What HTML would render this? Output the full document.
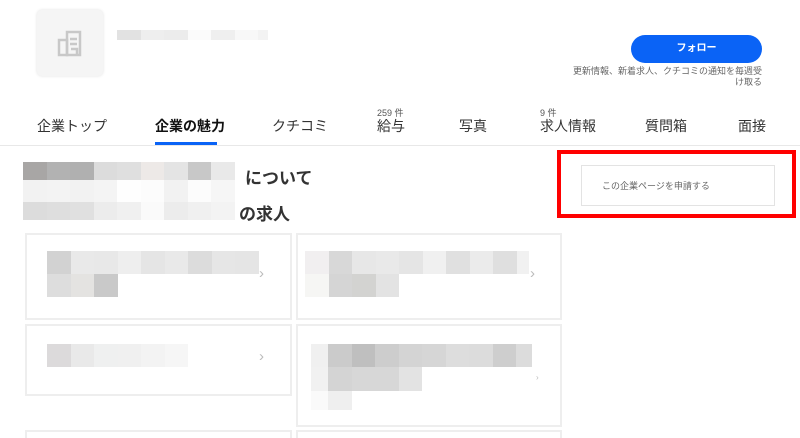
<!DOCTYPE html>
<html><head><meta charset="utf-8"><style>
*{margin:0;padding:0;box-sizing:border-box}
html,body{width:800px;height:438px;overflow:hidden}
body{background:#fff;position:relative;font-family:"Liberation Sans","Noto Sans CJK JP",sans-serif;color:#333}
.a{position:absolute}
.tab{position:absolute;top:116px;font-size:14px;color:#333;white-space:nowrap}
.cnt{position:absolute;top:106px;font-size:9px;color:#555}
.card{position:absolute;border:2px solid #eee;background:#fff}
.row{position:absolute;display:flex;height:23px}
.row i{display:block;width:23.5px;height:100%}
.chev{position:absolute;font-size:15px;color:#bbb}
</style></head><body>
<div class="a" style="left:37px;top:10px;width:66px;height:66px;background:#f5f5f5;border-radius:5px;box-shadow:0 0 3px rgba(0,0,0,.12)">
<svg width="66" height="66" viewBox="0 0 66 66"><g fill="none" stroke="#c8c8c8" stroke-width="2.5"><rect x="30" y="22" width="13" height="23"/><rect x="22" y="30" width="8" height="15"/><path d="M33 29h7M33 34h7M34 39h6v6"/></g></svg></div>
<div class="row" style="left:117px;top:30px;height:10px"><i style="background:#e2e2e2"></i><i style="background:#eee"></i><i style="background:#ececec"></i><i style="background:#fbfbfb"></i><i style="background:#efefef"></i><i style="background:#f8f8f8"></i><i style="background:#f3f3f3;width:10px"></i></div>
<div class="a" style="left:631px;top:35px;width:131px;height:28px;background:#0a63f6;border-radius:14px;color:#fff;font-size:10px;font-weight:bold;text-align:center;line-height:28px">フォロー</div>
<div class="a" style="right:38px;top:66px;width:220px;text-align:right;font-size:9px;line-height:11px;color:#666">更新情報、新着求人、クチコミの通知を毎週受<br>け取る</div>
<div class="tab" style="left:37px">企業トップ</div>
<div class="tab" style="left:155px;font-weight:bold;color:#111">企業の魅力</div>
<div class="a" style="left:155px;top:142px;width:62px;height:3px;background:#0a63f6"></div>
<div class="tab" style="left:272px">クチコミ</div>
<div class="cnt" style="left:377px">259 件</div><div class="tab" style="left:377px">給与</div>
<div class="tab" style="left:459px">写真</div>
<div class="cnt" style="left:540px">9 件</div><div class="tab" style="left:540px">求人情報</div>
<div class="tab" style="left:645px">質問箱</div>
<div class="tab" style="left:738px">面接</div>
<div class="a" style="left:0;top:145px;width:800px;height:1px;background:#e8e8e8"></div>
<div class="row" style="left:23px;top:162px;height:18px"><i style="background:#a8a6a5"></i><i style="background:#b2b2b2"></i><i style="background:#b0b0b0"></i><i style="background:#dcdcdc"></i><i style="background:#dfdfdf"></i><i style="background:#ede9e7"></i><i style="background:#e4e4e4"></i><i style="background:#c8c8c8"></i><i style="background:#e9e9e9"></i></div>
<div class="row" style="left:23px;top:180px;height:22px"><i style="background:#f2f2f2"></i><i style="background:#f3f3f3"></i><i style="background:#f2f2f2"></i><i style="background:#f4f4f4"></i><i style="background:#fefefe"></i><i style="background:#fcfcfc"></i><i style="background:#f2f2f2"></i><i style="background:#fcfcfc"></i><i style="background:#f6f6f6"></i></div>
<div class="row" style="left:23px;top:202px;height:18px"><i style="background:#dcdcdc"></i><i style="background:#dedede"></i><i style="background:#e0e0e0"></i><i style="background:#ececec"></i><i style="background:#f0f0f0"></i><i style="background:#fafafa"></i><i style="background:#ececec"></i><i style="background:#f0f0f0"></i><i style="background:#f3f3f3"></i></div>
<div class="a" style="left:245px;top:164px;font-size:17px;font-weight:bold;color:#333">について</div>
<div class="a" style="left:239px;top:200px;font-size:17px;font-weight:bold;color:#333">の求人</div>
<div class="a" style="left:557px;top:150px;width:239px;height:68px;border:4px solid #f00"></div>
<div class="a" style="left:581px;top:165px;width:194px;height:41px;border:1px solid #e3e3e3;font-size:9px;color:#666;padding:13px 0 0 20px">この企業ページを申請する</div>
<div class="card" style="left:25px;top:233px;width:267px;height:87px"></div>
<div class="row" style="left:47px;top:251px"><i style="background:#d2d2d2"></i><i style="background:#e9e9e9"></i><i style="background:#e8e8e8"></i><i style="background:#eeeeee"></i><i style="background:#e5e5e5"></i><i style="background:#e9e9e9"></i><i style="background:#dcdcdc"></i><i style="background:#e6e6e6"></i><i style="background:#e5e5e5"></i></div>
<div class="row" style="left:47px;top:274px"><i style="background:#ddd"></i><i style="background:#e4e3e1"></i><i style="background:#c9c9c9"></i></div>
<div class="chev" style="left:259px;top:265px">›</div>
<div class="card" style="left:296px;top:233px;width:266px;height:87px"></div>
<div class="row" style="left:305px;top:251px"><i style="background:#f1eff0"></i><i style="background:#d8d8d8"></i><i style="background:#e7e7e7"></i><i style="background:#e9e9e9"></i><i style="background:#e5e5e5"></i><i style="background:#f0f0f0"></i><i style="background:#e0e0e0"></i><i style="background:#ebebeb"></i><i style="background:#dfdfdf"></i><i style="background:#f1f1f1;width:12px"></i></div>
<div class="row" style="left:305px;top:274px"><i style="background:#f6f6f4"></i><i style="background:#d5d5d5"></i><i style="background:#d3d3d1"></i><i style="background:#e3e3e3"></i></div>
<div class="chev" style="left:530px;top:265px">›</div>
<div class="card" style="left:25px;top:324px;width:267px;height:72px"></div>
<div class="row" style="left:47px;top:344px"><i style="background:#dcdadb"></i><i style="background:#e9e9e9"></i><i style="background:#eff0f0"></i><i style="background:#f0f0f0"></i><i style="background:#f3f3f3"></i><i style="background:#f6f6f6"></i></div>
<div class="chev" style="left:259px;top:348px">›</div>
<div class="card" style="left:296px;top:324px;width:266px;height:103px"></div>
<div class="row" style="left:311px;top:344px"><i style="background:#f0f0f0;width:17px"></i><i style="background:#cbcbcb"></i><i style="background:#bfbfbf"></i><i style="background:#cdcdcd"></i><i style="background:#d4d4d4"></i><i style="background:#d6d6d6"></i><i style="background:#dddddd"></i><i style="background:#dcdcdc"></i><i style="background:#cecece"></i><i style="background:#dcdcdc;width:16px"></i></div>
<div class="row" style="left:311px;top:367px;height:24px"><i style="background:#f1f1f1;width:17px"></i><i style="background:#d4d4d4"></i><i style="background:#d7d7d7"></i><i style="background:#d7d7d7"></i><i style="background:#e3e3e3"></i></div>
<div class="row" style="left:311px;top:391px;height:19px"><i style="background:#fafafa;width:17px"></i><i style="background:#efefef"></i></div>
<div class="chev" style="left:536px;top:373px;font-size:8px">›</div>
<div class="card" style="left:25px;top:430px;width:267px;height:20px"></div>
<div class="card" style="left:296px;top:430px;width:266px;height:20px"></div>
</body></html>
